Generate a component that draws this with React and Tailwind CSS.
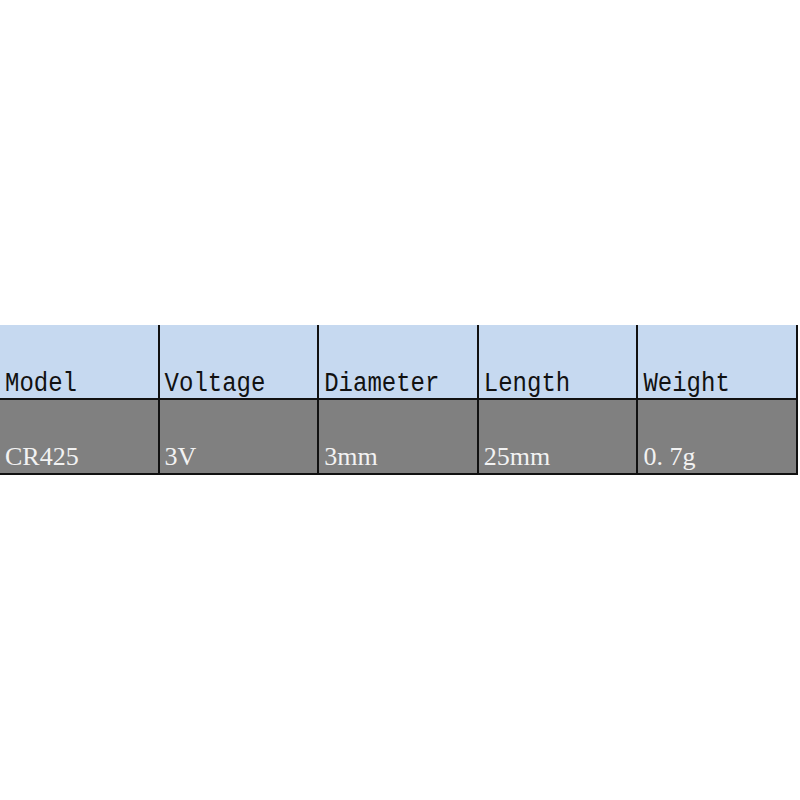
const HEAD = ['Model', 'Voltage', 'Diameter', 'Length', 'Weight'];
const ROW = ['CR425', '3V', '3mm', '25mm', '0. 7g'];

export default function App() {
  return (
    <div className="w-[800px] h-[800px] bg-white pt-[325px]">
      <div className="grid grid-cols-5 w-[798px]">
        {HEAD.map((h) => (
          <div
            key={h}
            className="h-[75px] bg-[#c6d9f0] border-r-2 border-b-2 border-[#111] flex items-end pl-[5px] pb-0 text-[24px] leading-none text-[#111] font-['Liberation_Mono',monospace]"
          >
            <span className="inline-block scale-y-[1.15] origin-bottom">{h}</span>
          </div>
        ))}
        {ROW.map((v) => (
          <div
            key={v}
            className="h-[75px] bg-[#808080] border-r-2 border-b-2 border-[#111] flex items-end pl-[5px] pb-[3px] text-[26px] leading-none text-[#f2f2f2] font-['Liberation_Serif',serif]"
          >
            {v}
          </div>
        ))}
      </div>
    </div>
  );
}
